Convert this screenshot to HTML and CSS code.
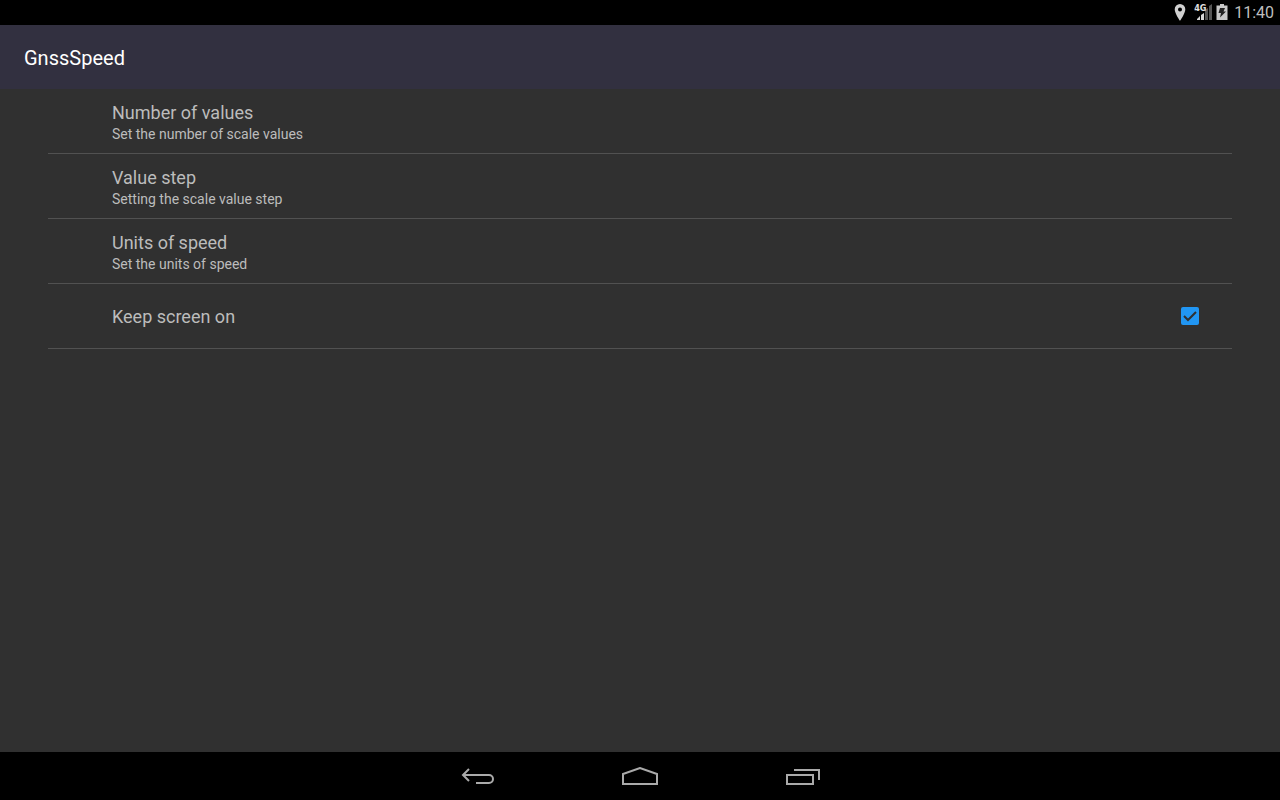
FILE: index.html
```html
<!DOCTYPE html>
<html lang="en">
<head>
<meta charset="utf-8">
<meta name="viewport" content="width=device-width, initial-scale=1">
<title>GnssSpeed</title>
<link rel="stylesheet" href="styles.css">
</head>
<body>
<div class="screen">
  <div class="status-bar">
    <svg class="status-pin" width="12" height="18" viewBox="0 0 12 18" aria-hidden="true">
      <path fill="#d0d0d0" fill-rule="evenodd" d="M6 0a5.300 5.300 0 0 0-5.300 5.300C.7 9.500 6 17 6 17s5.300-7.500 5.300-11.700A5.300 5.300 0 0 0 6 0zm0 3.500a2 2 0 1 1 0 4 2 2 0 0 1 0-4z"/>
    </svg>
    <span class="signal">
      <svg width="18" height="18" viewBox="0 0 18 18" aria-hidden="true">
        <path fill="#d8d8d8" d="M3 15l3-3v4H3zM7 11l3-2v7H7z"/>
        <path fill="#555" d="M11 6l3-2v12h-3zM15 2l3-2v16h-3z"/>
      </svg>
      <span class="signal-type">4G</span>
    </span>
    <svg class="status-battery" width="12" height="18" viewBox="0 0 12 18" aria-hidden="true">
      <path fill="#c8c8c8" d="M4 0h4v1.500h3.500V16H.5V1.500H4z"/>
      <path fill="#222" d="M4 4h5L7.500 7.500H10L4 13.500l1-4.500H2.500z"/>
    </svg>
    <time class="clock">11:40</time>
  </div>

  <header class="app-bar"><h1 class="app-title">GnssSpeed</h1></header>

  <main class="content">
    <ul class="preferences">
      <li class="preference">
        <button class="preference-button" type="button">
          <span class="preference-title">Number of values</span>
          <span class="preference-summary">Set the number of scale values</span>
        </button>
      </li>
      <li class="preference">
        <button class="preference-button" type="button">
          <span class="preference-title">Value step</span>
          <span class="preference-summary">Setting the scale value step</span>
        </button>
      </li>
      <li class="preference">
        <button class="preference-button" type="button">
          <span class="preference-title">Units of speed</span>
          <span class="preference-summary">Set the units of speed</span>
        </button>
      </li>
      <li class="preference">
        <label class="preference-toggle" for="keep-on">
          <span class="preference-title">Keep screen on</span>
          <span class="check">
            <input class="check-input" id="keep-on" type="checkbox" checked>
            <svg class="check-mark" width="18" height="18" viewBox="0 0 18 18" aria-hidden="true">
              <path d="M3 9l4 4 8-8" fill="none" stroke="#303030" stroke-width="2"/>
            </svg>
          </span>
        </label>
      </li>
    </ul>
  </main>

  <nav class="nav-bar" aria-label="System">
    <button class="nav-button" type="button" aria-label="Back">
      <svg width="36" height="20" viewBox="0 0 36 20" fill="none" stroke="#aaa" stroke-width="2" aria-hidden="true">
        <path d="M9 2L3 8l6 6M3 8h26a4 4 0 0 1 0 8H16"/>
      </svg>
    </button>
    <button class="nav-button" type="button" aria-label="Home">
      <svg width="36" height="20" viewBox="0 0 36 20" fill="none" stroke="#aaa" stroke-width="2" aria-hidden="true">
        <path d="M1 17V7l17-6 17 6v10z"/>
      </svg>
    </button>
    <button class="nav-button" type="button" aria-label="Recent apps">
      <svg width="36" height="20" viewBox="0 0 36 20" fill="none" stroke="#aaa" stroke-width="2" aria-hidden="true">
        <path d="M3 8h26v9H3zM10 3h25v10"/>
      </svg>
    </button>
  </nav>
</div>
</body>
</html>
```
FILE: styles.css
```css
* {
  box-sizing: border-box;
}

body {
  margin: 0;
  background: #303030;
  color: #bcbcbc;
  font-family: Roboto, "Liberation Sans", sans-serif;
}

button {
  padding: 0;
  border: 0;
  background: none;
  color: inherit;
  font: inherit;
}

svg {
  display: block;
}

.screen {
  display: flex;
  flex-direction: column;
  min-height: 100vh;
}

.status-bar {
  display: flex;
  align-items: center;
  justify-content: flex-end;
  height: 25px;
  padding: 1px 6px 0 0;
  background: #000;
}

.status-pin {
  margin-right: 8px;
}

.signal {
  position: relative;
  margin-right: 4px;
}

.signal-type {
  position: absolute;
  top: 0;
  left: 0;
  color: #e0e0e0;
  font-family: "Liberation Sans Narrow", "DejaVu Sans Condensed", Roboto, sans-serif;
  font-size: 9px;
  font-weight: 700;
  line-height: 9px;
}

.status-battery {
  margin-right: 6px;
}

.clock {
  color: #bebebe;
  font-size: 16px;
  line-height: 24px;
}

.app-bar {
  display: flex;
  align-items: center;
  min-height: 64px;
  padding: 2px 24px 0;
  background: #323040;
}

.app-title {
  margin: 0;
  color: #fff;
  font-size: 20px;
  font-weight: 400;
  line-height: 24px;
}

.content {
  flex: 1;
  padding: 0 48px;
}

.preferences {
  margin: 0;
  padding: 0;
  list-style: none;
}

.preference {
  border-bottom: 1px solid #515151;
}

.preference-button,
.preference-toggle {
  display: flex;
  width: 100%;
  min-height: 64px;
  padding: 2px 33px 0 64px;
}

.preference-button {
  flex-direction: column;
  align-items: flex-start;
  justify-content: center;
  text-align: left;
}

.preference-toggle {
  align-items: center;
  justify-content: space-between;
}

.preference-title {
  font-size: 18px;
  line-height: 24px;
}

.preference-summary {
  font-size: 14px;
  line-height: 18px;
}

.check {
  position: relative;
  padding-bottom: 2px;
}

.check-input {
  display: block;
  width: 18px;
  height: 18px;
  margin: 0;
  border: 2px solid #bcbcbc;
  border-radius: 2px;
  appearance: none;
}

.check-input:checked {
  border-color: #2196f3;
  background: #2196f3;
}

.check-mark {
  position: absolute;
  top: 0;
  left: 0;
  visibility: hidden;
  pointer-events: none;
}

.check-input:checked + .check-mark {
  visibility: visible;
}

.nav-bar {
  display: flex;
  justify-content: center;
  height: 48px;
  padding-top: 2px;
  background: #000;
}

.nav-button {
  display: flex;
  align-items: center;
  justify-content: center;
  width: 162px;
}
```
